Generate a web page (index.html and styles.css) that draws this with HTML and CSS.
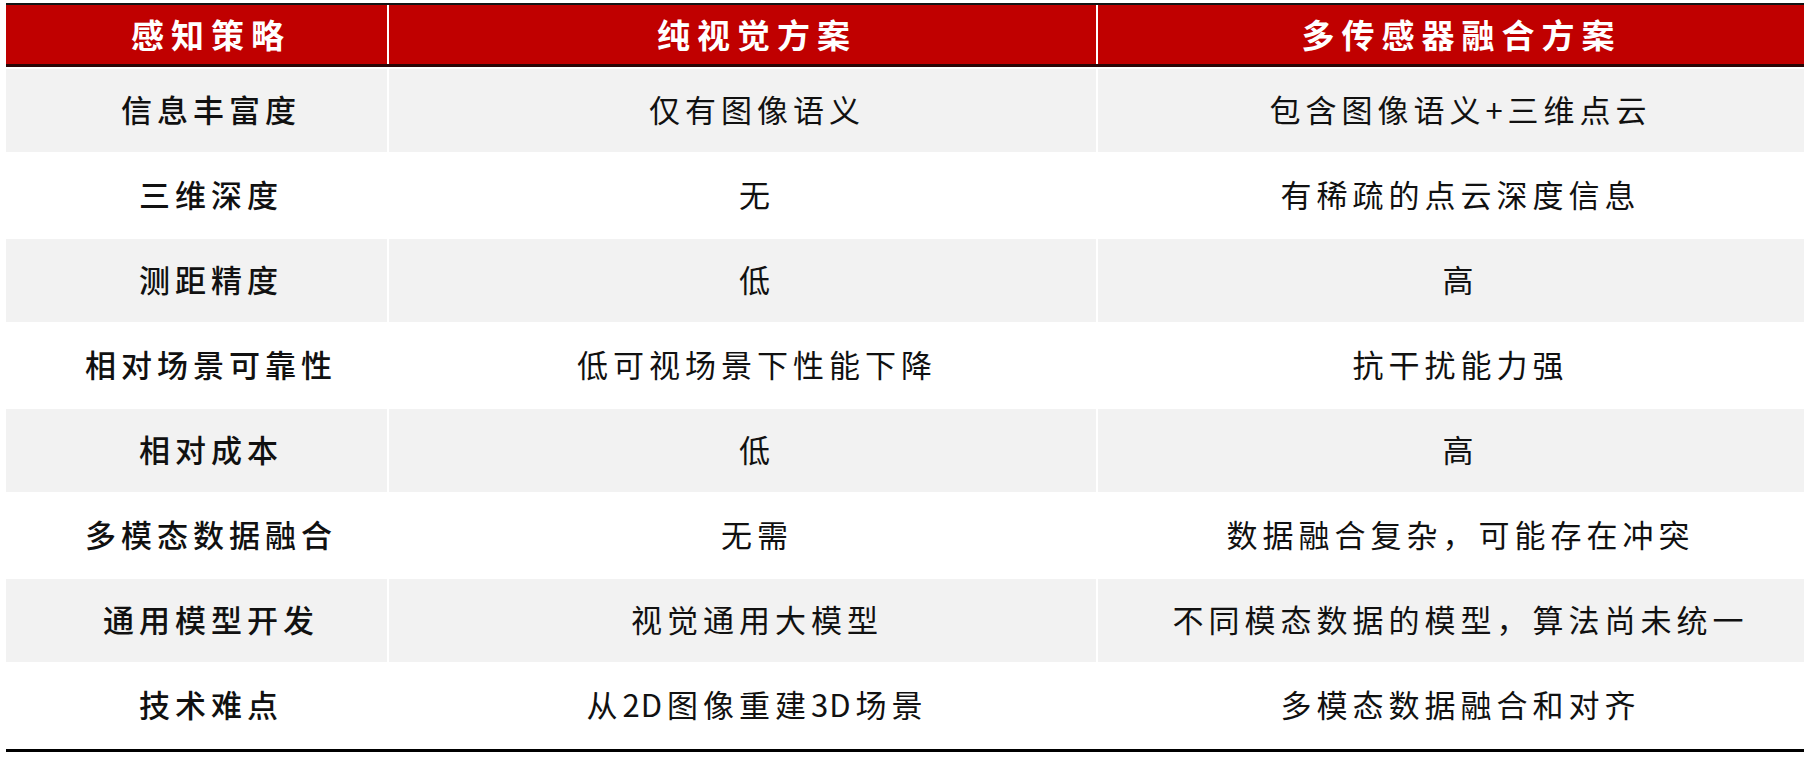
FILE: index.html
```html
<!DOCTYPE html>
<html lang="zh-CN">
<head>
<meta charset="utf-8">
<title>感知策略对比</title>
<link rel="stylesheet" href="styles.css">
</head>
<body>
<div class="page">
  <div class="tbl">
    <div class="row head">
      <div class="cell">感知策略</div>
      <div class="cell">纯视觉方案</div>
      <div class="cell">多传感器融合方案</div>
    </div>
    <div class="body">
      <div class="row shade">
        <div class="cell key">信息丰富度</div>
        <div class="cell">仅有图像语义</div>
        <div class="cell">包含图像语义<span class="lat">+</span>三维点云</div>
      </div>
      <div class="row">
        <div class="cell key">三维深度</div>
        <div class="cell">无</div>
        <div class="cell">有稀疏的点云深度信息</div>
      </div>
      <div class="row shade">
        <div class="cell key">测距精度</div>
        <div class="cell">低</div>
        <div class="cell">高</div>
      </div>
      <div class="row">
        <div class="cell key">相对场景可靠性</div>
        <div class="cell">低可视场景下性能下降</div>
        <div class="cell">抗干扰能力强</div>
      </div>
      <div class="row shade">
        <div class="cell key">相对成本</div>
        <div class="cell">低</div>
        <div class="cell">高</div>
      </div>
      <div class="row">
        <div class="cell key">多模态数据融合</div>
        <div class="cell">无需</div>
        <div class="cell">数据融合复杂，可能存在冲突</div>
      </div>
      <div class="row shade">
        <div class="cell key">通用模型开发</div>
        <div class="cell">视觉通用大模型</div>
        <div class="cell">不同模态数据的模型，算法尚未统一</div>
      </div>
      <div class="row">
        <div class="cell key">技术难点</div>
        <div class="cell">从<span class="lat">2D</span>图像重建<span class="lat">3D</span>场景</div>
        <div class="cell">多模态数据融合和对齐</div>
      </div>
    </div>
  </div>
</div>
</body>
</html>
```

FILE: styles.css
```css
html, body {
  margin: 0;
  padding: 0;
  background: #ffffff;
}

.page {
  padding: 3px 9px 0 6px;
  font-family: "Noto Sans CJK SC", "Noto Sans", sans-serif;
}

.tbl {
  width: 1798px;
}

.row {
  display: grid;
  grid-template-columns: 381px 707px 706px;
  column-gap: 2px;
  height: 85px;
}

.cell {
  display: flex;
  align-items: center;
  justify-content: center;
  font-size: 31px;
  letter-spacing: 5px;
  padding-left: 29px;
  padding-bottom: 4px;
  box-sizing: border-box;
  color: #111111;
  white-space: nowrap;
}

.cell:nth-child(3) {
  padding-left: 19px;
}

.lat {
  letter-spacing: 1px;
  margin-right: 4px;
}

.shade .cell {
  background: #f2f2f2;
  margin: 1px 0;
}

.key {
  font-weight: 500;
}

.head {
  height: 59px;
  border-top: 2px solid #141414;
  border-bottom: 3px solid #2a0606;
  margin-bottom: 1px;
}

.head .cell {
  background: #c00000;
  color: #ffffff;
  font-size: 33px;
  font-weight: 700;
  letter-spacing: 7px;
  padding-left: 29px;
  padding-bottom: 2px;
}

.head .cell:nth-child(3) {
  padding-left: 21px;
}

.body {
  border-bottom: 3px solid #000000;
  padding-bottom: 1px;
}
```
